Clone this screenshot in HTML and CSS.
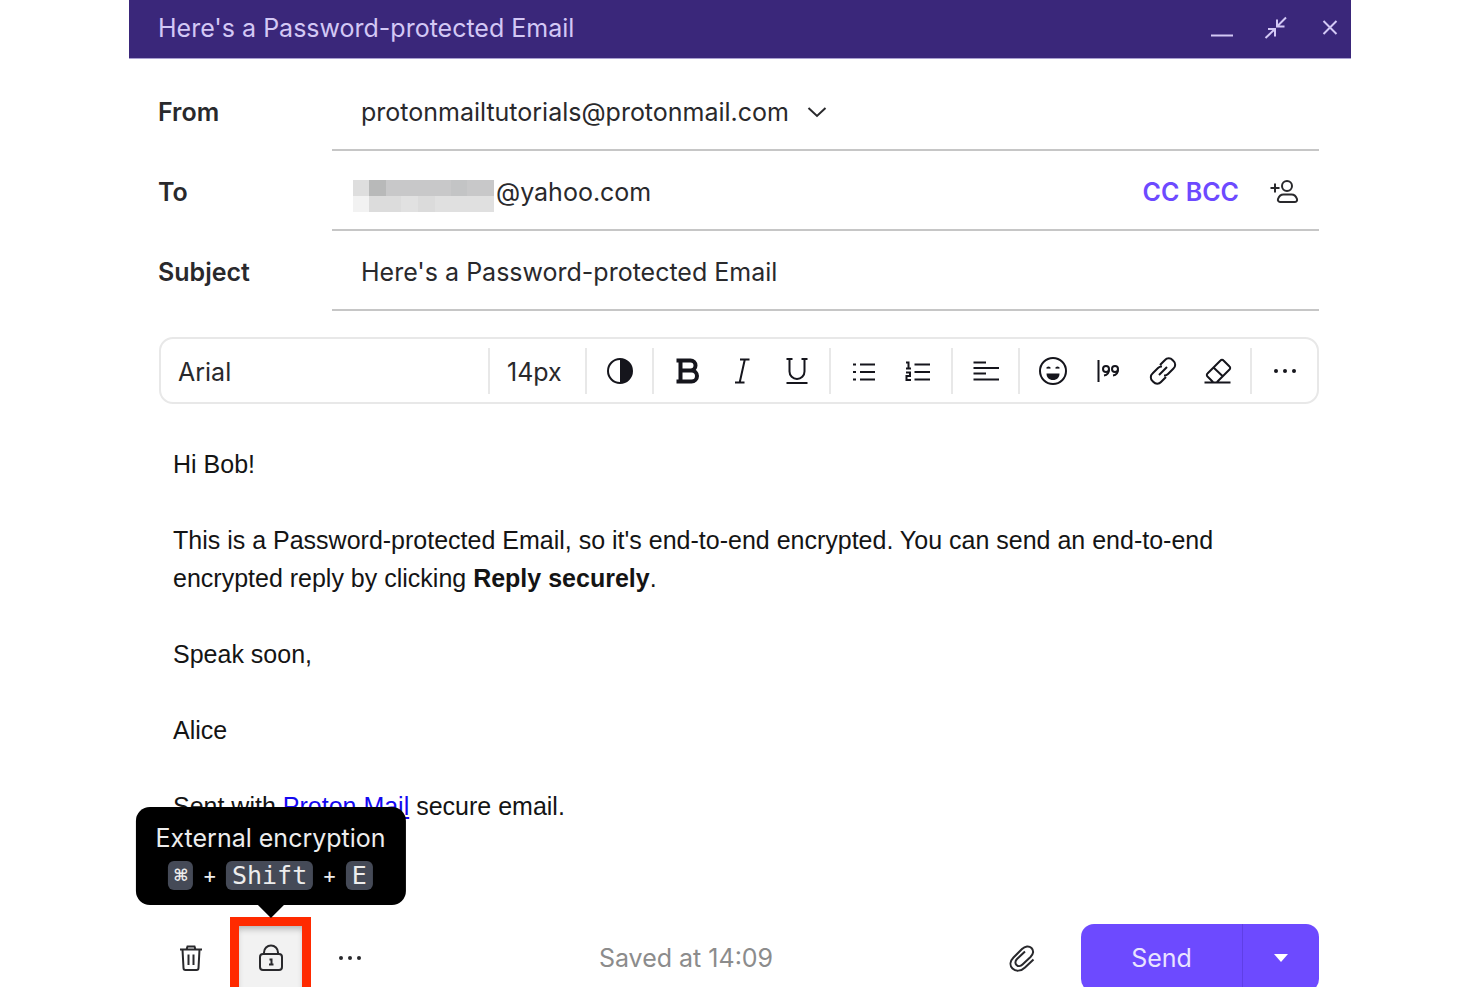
FILE: index.html
```
<!DOCTYPE html>
<html lang="en">
<head>
  <meta charset="UTF-8" />
  <title>Here's a Password-protected Email</title>
  <meta name="viewport" content="width=device-width, initial-scale=1.0" />
  <link rel="stylesheet" href="styles.css">
</head>
<body>
  <main class="composer">
    <header class="titlebar">
      <h1>Here's a Password-protected Email</h1>
      <button type="button" aria-label="Minimise">
        <svg width="24" height="24" viewBox="0 0 24 24"><path d="M1 19.500h22" /></svg>
      </button>
      <button type="button" aria-label="Shrink">
        <svg width="24" height="24" viewBox="0 0 24 24"><path d="M1.500 22 11 13M4 13h7v7.500M22 1.500 13 10.500M13 3.500V10.500h7.500" /></svg>
      </button>
      <button type="button" aria-label="Close">
        <svg width="24" height="24" viewBox="0 0 24 24"><path d="m5.500 5 13 13M18.500 5l-13 13" /></svg>
      </button>
    </header>

    <div class="fields">
      <div class="field">
        <label for="from">From</label>
        <div class="value">
          <select id="from"><option>protonmailtutorials@protonmail.com</option></select>
          <svg class="chevron" width="20" height="12" viewBox="0 0 20 12"><path d="m1.500 2 8.500 8 8.500-8" /></svg>
        </div>
      </div>
      <div class="field">
        <label for="to">To</label>
        <div class="value recipient">
          <span class="redacted"></span>
          <input id="to" type="text" value="@yahoo.com">
          <button type="button" class="cc">CC BCC</button>
          <button type="button" class="add-contact" aria-label="Insert contacts">
            <svg width="30" height="26" viewBox="0 0 30 26"><circle cx="18" cy="7" r="5" /><path d="M11 23h14.500c2 0 3-1.500 2.500-3-1-3-3-4.500-5.500-4.500h-8c-2.500 0-4.500 1.500-5.500 4.500-.5 1.500.5 3 2 3ZM6 4.500v9M1.500 9h9" /></svg>
          </button>
        </div>
      </div>
      <div class="field">
        <label for="subject">Subject</label>
        <div class="value">
          <input id="subject" type="text" value="Here's a Password-protected Email">
        </div>
      </div>
    </div>

    <div class="toolbar">
      <select class="font-name" aria-label="Font"><option>Arial</option></select>
      <select class="font-size" aria-label="Size"><option>14px</option></select>
      <div class="group">
        <button type="button" aria-label="Colour">
          <svg width="28" height="28" viewBox="0 0 28 28"><circle cx="14" cy="14" r="12" /><path class="solid" d="M14 2a12 12 0 0 1 0 24Z" /></svg>
        </button>
      </div>
      <div class="group">
        <button type="button" aria-label="Bold">
          <svg width="28" height="28" viewBox="0 0 28 28"><path class="heavy" d="M3.500 3.500h14a5 5 0 0 1 0 10H8M7.500 3.500v21M3.500 24.500H18.500a5.500 5.500 0 0 0 0-11H8" /></svg>
        </button>
        <button type="button" aria-label="Italic">
          <svg width="28" height="28" viewBox="0 0 28 28"><path d="M12 2.500h9.500M7 25.500h9.500M16.800 2.500 11.700 25.500" /></svg>
        </button>
        <button type="button" aria-label="Underline">
          <svg width="28" height="28" viewBox="0 0 28 28"><path d="M3.500 2h6M18.500 2h6M6.500 2v12.500a7.500 7.500 0 0 0 15 0V2M3.500 26h21" /></svg>
        </button>
      </div>
      <div class="group">
        <button type="button" aria-label="Bulleted list">
          <svg width="28" height="28" viewBox="0 0 28 28"><path d="M10 7.500h15M10 15h15M10 22.500h15M3 7.500h3M3 15h3M3 22.500h3" /></svg>
        </button>
        <button type="button" aria-label="Numbered list">
          <svg width="28" height="28" viewBox="0 0 28 28"><path d="M9.500 7.500H25M9.500 15H25M9.500 22.500H25M1 5.500h2.500v6M1 11.500h5M1 15.500h4v3.500H1.500v4H6" /></svg>
        </button>
      </div>
      <div class="group">
        <button type="button" aria-label="Align">
          <svg width="28" height="28" viewBox="0 0 28 28"><path d="M1.500 5.500H14M1.500 11H27M1.500 16.500H14M1.500 22.500H27" /></svg>
        </button>
      </div>
      <div class="group">
        <button type="button" aria-label="Emoji">
          <svg width="30" height="30" viewBox="0 0 30 30"><circle cx="15" cy="15" r="13" /><path class="solid" d="M8.500 17.500h13c0 4-2.500 6.500-6.500 6.500s-6.500-2.500-6.500-6.500Z" /><path d="M9 12.500c.5-1.500 2.500-1.500 3 0M18 12.500c.5-1.500 2.500-1.500 3 0" /></svg>
        </button>
        <button type="button" aria-label="Quote">
          <svg width="28" height="28" viewBox="0 0 28 28"><path d="M4.500 3v22M15 12.500c0 3-1.500 5.500-5 6M24 12.500c0 3-1.500 5.500-5 6" /><circle cx="12" cy="12" r="3" /><circle cx="21" cy="12" r="3" /></svg>
        </button>
        <button type="button" aria-label="Insert link">
          <svg width="30" height="30" viewBox="0 0 30 30"><path d="m12 9 5-5a5 5 0 0 1 7.500 0l1 1a5 5 0 0 1 0 7.500l-5.500 5.500a5 5 0 0 1-4 1.500M18 21l-5 5a5 5 0 0 1-7.500 0l-1-1a5 5 0 0 1 0-7.500l5.500-5.500a5 5 0 0 1 4-1.500M11 19l8-8" /></svg>
        </button>
        <button type="button" aria-label="Clear formatting">
          <svg width="28" height="28" viewBox="0 0 28 28"><path d="M.5 25.500h26M9 25 3.500 19.500a2 2 0 0 1 0-3L16.500 3.500a2 2 0 0 1 3 0l6 6a2 2 0 0 1 0 3L13 25M9.500 10.500l9.500 9" /></svg>
        </button>
      </div>
      <div class="group">
        <button type="button" aria-label="More formatting">
          <svg class="dots" width="26" height="6" viewBox="0 0 26 6"><circle cx="4" cy="3" r="2" /><circle cx="13" cy="3" r="2" /><circle cx="22" cy="3" r="2" /></svg>
        </button>
      </div>
    </div>

    <div class="editor" contenteditable="true" spellcheck="false" role="textbox" aria-label="Message">
      <p>Hi Bob!</p>
      <p>This is a Password-protected Email, so it's end-to-end encrypted. You can send an end-to-end encrypted reply by clicking <b>Reply securely</b>.</p>
      <p>Speak soon,</p>
      <p>Alice</p>
      <p>Sent with <a href="#">Proton Mail</a> secure email.</p>
    </div>

    <footer class="actions">
      <button type="button" aria-label="Delete draft">
        <svg width="24" height="28" viewBox="0 0 24 28"><path d="M1 5.500h22M7.500 5.500l1-3h7l1 3M3.500 5.500l1 18.500a2 2 0 0 0 2 2h11a2 2 0 0 0 2-2l1-18.500M9.500 10.500v10.500M14.500 10.500v10.500" /></svg>
      </button>
      <div class="lock">
        <button type="button" aria-label="External encryption" aria-describedby="lock-tip">
          <svg width="24" height="28" viewBox="0 0 24 28"><rect x="1" y="10" width="22" height="16" rx="3" /><path d="M5 10V8.500a7 7 0 0 1 14 0V10M10.500 15.500H12.500v5M10 20.500h4.500" /></svg>
        </button>
        <div class="tooltip" id="lock-tip" role="tooltip">
          External encryption
          <div class="keys"><kbd class="cmd">⌘</kbd> + <kbd>Shift</kbd> + <kbd>E</kbd></div>
        </div>
      </div>
      <button type="button" aria-label="More options">
        <svg class="dots" width="26" height="6" viewBox="0 0 26 6"><circle cx="4" cy="3" r="2" /><circle cx="13" cy="3" r="2" /><circle cx="22" cy="3" r="2" /></svg>
      </button>
      <span class="saved">Saved at 14:09</span>
      <button type="button" aria-label="Attachments">
        <svg width="28" height="28" viewBox="0 0 28 28"><path d="m25.500 15.500-8.500 8c-4 4-9.500 4-12.500 1-3-3-2.500-7.500 1-11L14 5c3-3 7-3.500 9.500-1s2 6-1 9l-8 7.500c-2 2-4.500 2-6 .5s-1.500-4 .5-6l8-7.500" /></svg>
      </button>
      <div class="send">
        <button type="button">Send</button>
        <button type="button" class="send-more" aria-label="More send options">
          <svg width="14" height="8" viewBox="0 0 14 8"><path class="solid" d="M0 0h14L7 8Z" /></svg>
        </button>
      </div>
    </footer>
  </main>
</body>
</html>
```
FILE: styles.css
```
* { box-sizing: border-box; }

body {
  margin: 0;
  padding: 0 129px;
  font-family: Inter, sans-serif;
  font-size: 25px;
  font-optical-sizing: none;
  background: white;
  color: #29292c;
}

button, select, input {
  margin: 0;
  padding: 0;
  border: none;
  background: none;
  font: inherit;
  font-optical-sizing: inherit;
  color: inherit;
  appearance: none;
}

button {
  display: flex;
  align-items: center;
  justify-content: center;
  cursor: pointer;
}

svg {
  flex: none;
  fill: none;
  stroke: currentColor;
  stroke-width: 2;
}

.solid, .dots {
  fill: currentColor;
  stroke: none;
}

.heavy { stroke-width: 4; }

.composer {
  display: flex;
  flex-direction: column;
  height: 100vh;
  overflow: hidden;
}

/* title bar */
.titlebar {
  display: flex;
  flex: none;
  align-items: center;
  gap: 22px;
  height: 59px;
  padding: 0 5px 2px 29px;
  border-bottom: 1px solid #a99fd0;
  background: #3a277a;
  color: #d3c8f5;
}

.titlebar h1 {
  flex: 1;
  margin: 0;
  font-size: 25px;
  font-weight: 400;
}

.titlebar button { width: 32px; height: 32px; }

/* address fields */
.fields { padding: 12px 32px 0 29px; }

.field {
  display: flex;
  height: 80px;
}

.field label {
  width: 174px;
  padding-top: 4px;
  line-height: 74px;
  font-weight: 600;
}

.value {
  display: flex;
  flex: 1;
  align-items: center;
  padding: 4px 20px 0 29px;
  border-bottom: 2px solid #c6c6c6;
}

.value input { flex: 1; min-width: 0; }

.chevron { margin-left: 18px; }

.recipient { padding-left: 21px; }

.redacted {
  width: 141px;
  height: 32px;
  margin: 8px 2px 0 0;
  background:
    linear-gradient(90deg, #dedede 16px, #b8b9b9 16px 33px, #c8c8c9 33px 98px, #c3c4c5 98px 114px, #c8c8c9 114px) top / 100% 16px no-repeat,
    linear-gradient(90deg, #f2f2f2 16px, #dcdcdc 16px 48px, #e1e1e1 48px 65px, #dbdbdb 65px 82px, #e0e0e0 82px) bottom / 100% 16px no-repeat;
}

.cc {
  font-weight: 600;
  color: #6d4aff;
}

.add-contact { margin-left: 30px; }

/* formatting toolbar */
.toolbar {
  display: flex;
  flex: none;
  align-items: center;
  height: 67px;
  margin: 26px 32px 0 30px;
  border: 2px solid #e8e8e8;
  border-radius: 14px;
}

.toolbar select, .group { height: 46px; }

.toolbar select { padding: 2px 0 0 17px; }

.font-name { flex: 1; }

.font-size {
  width: 97px;
  border-left: 2px solid #e8e8e8;
}

.group {
  display: flex;
  padding: 0 5px;
  border-left: 2px solid #e8e8e8;
}

.group button { width: 55px; color: #15151c; }

/* message */
.editor {
  flex: 1;
  min-height: 0;
  padding: 41px 60px 0 44px;
  font-family: "Liberation Sans", Arial, sans-serif;
  line-height: 38px;
  color: #141414;
  outline: none;
}

.editor p { margin: 0 0 38px; }

.editor a { color: #1408f0; }

/* bottom bar */
.actions {
  display: flex;
  flex: none;
  align-items: flex-start;
  height: 70px;
  padding: 0 32px 0 23px;
}

.actions > button, .lock {
  width: 78px;
  height: 82px;
}

.lock {
  position: relative;
  width: 81px;
}

.lock button {
  width: 100%;
  height: 100%;
  border: 9px solid #ff2a00;
  background: #f2f2f2;
  box-shadow: inset 0 5px 6px -2px #b4b4b4;
}

.tooltip {
  position: absolute;
  bottom: calc(100% + 12px);
  left: 50%;
  width: max-content;
  padding: 12px 20px;
  border-radius: 14px;
  background: black;
  color: #ededed;
  line-height: 38px;
  text-align: center;
  transform: translateX(-50%);
}

.tooltip::after {
  content: "";
  position: absolute;
  top: 100%;
  left: 50%;
  border: 13px solid transparent;
  border-top-color: black;
  border-bottom: none;
  transform: translateX(-50%);
}

.keys {
  display: flex;
  align-items: center;
  justify-content: center;
  gap: 9px;
  height: 36px;
  font-size: 22px;
}

.keys kbd {
  padding: 0 6px;
  border-radius: 6px;
  background: #454a57;
  font-family: "DejaVu Sans Mono", monospace;
  font-size: 25px;
  line-height: 29px;
}

.keys .cmd {
  font-size: 22px;
  font-weight: 700;
}

.saved {
  flex: 1;
  line-height: 82px;
  text-align: center;
  color: #8c8c8c;
}

.send {
  display: flex;
  height: 68px;
  margin: 7px 0 0 20px;
  border-radius: 13px;
  background: #6d4aff;
  color: #e9e4ff;
}

.send button { width: 161px; }

.send .send-more {
  width: 77px;
  border-left: 1px solid #5f3fe6;
  color: white;
}
```
